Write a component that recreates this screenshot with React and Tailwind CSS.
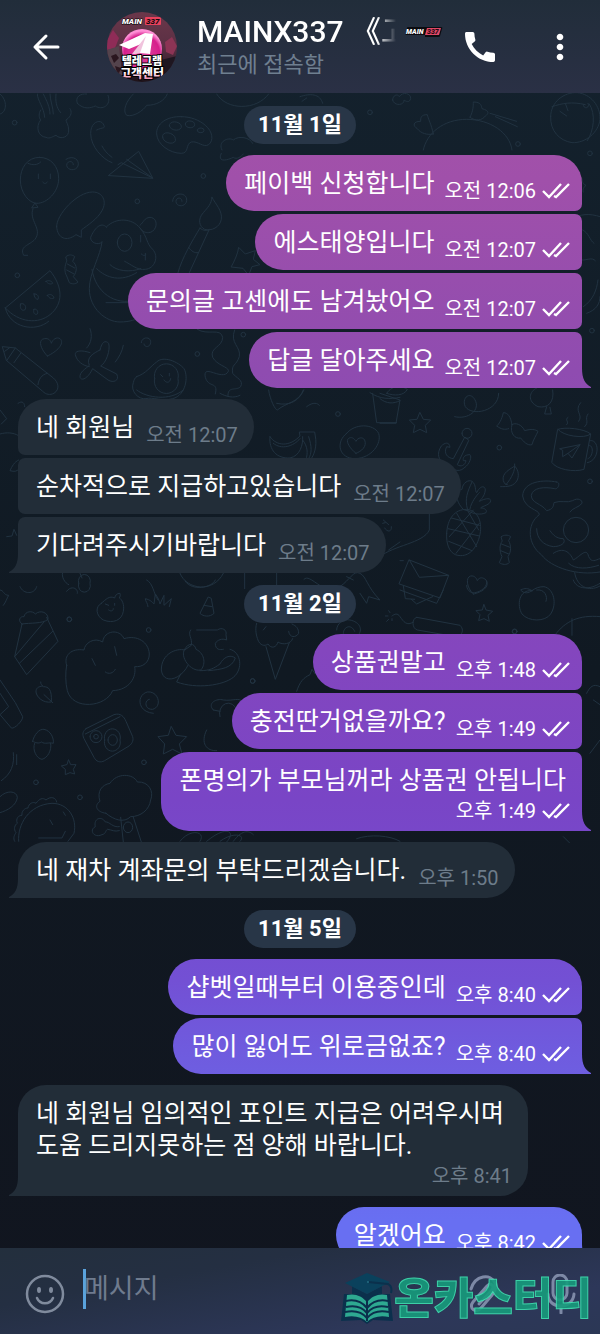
import clsx from "clsx";
import { MdCall, MdMoreVert } from "react-icons/md";

const days = [
  {
    date: "11월 1일",
    groups: [
      {
        from: "me",
        messages: [
          { lines: ["페이백 신청합니다"], time: "오전 12:06" },
          { lines: ["에스태양입니다"], time: "오전 12:07" },
          { lines: ["문의글 고센에도 남겨놨어오"], time: "오전 12:07" },
          { lines: ["답글 달아주세요"], time: "오전 12:07" }
        ]
      },
      {
        from: "them",
        messages: [
          { lines: ["네 회원님"], time: "오전 12:07" },
          { lines: ["순차적으로 지급하고있습니다"], time: "오전 12:07" },
          { lines: ["기다려주시기바랍니다"], time: "오전 12:07" }
        ]
      }
    ]
  },
  {
    date: "11월 2일",
    groups: [
      {
        from: "me",
        messages: [
          { lines: ["상품권말고"], time: "오후 1:48" },
          { lines: ["충전딴거없을까요?"], time: "오후 1:49" },
          { lines: ["폰명의가 부모님꺼라 상품권 안됩니다"], time: "오후 1:49", stacked: true }
        ]
      },
      {
        from: "them",
        messages: [{ lines: ["네 재차 계좌문의 부탁드리겠습니다."], time: "오후 1:50" }]
      }
    ]
  },
  {
    date: "11월 5일",
    groups: [
      {
        from: "me",
        messages: [
          { lines: ["샵벳일때부터 이용중인데"], time: "오후 8:40" },
          { lines: ["많이 잃어도 위로금없죠?"], time: "오후 8:40" }
        ]
      },
      {
        from: "them",
        messages: [
          {
            lines: ["네 회원님 임의적인 포인트 지급은 어려우시며", "도움 드리지못하는 점 양해 바랍니다."],
            time: "오후 8:41",
            stacked: true
          }
        ]
      },
      {
        from: "me",
        messages: [{ lines: ["알겠어요"], time: "오후 8:42" }]
      }
    ]
  }
];

// Wallpaper doodles, drawn at 3x and grouped by the area they cover
const doodles = [
  {
    at: "translate(0 110) scale(0.3333)",
    paths: [
      // balloon
      "M118 142c-36 0-57 32-57 68 0 38 26 70 50 70 30 0 65-34 65-74 0-38-24-64-58-64zM84 160c14 6 28 6 38-4M115 192v14M151 192v14M128 216c4 6 10 6 14 0M104 280l-9 14 18-2zM99 296c-14 36 30 60 6 92-16 18-48 20-34 48h12",
      // swirls
      "M198 148c22-14 42 2 36 20-6 16-32 14-34-2 0-14 20-16 20-2M518 274c0-28 44-30 42-2-2 20-32 20-32 2 0-12 18-14 18 0M424 698c0-18 30-20 28 0-2 16-20 14-20 4",
      // paper plane with its trail
      "M326 196l90-72 42 80zM354 164l10-6 94 46-78-56M290 60c20-10 28-2 20-18-10-16-38-6-38 28 0 40 36 78 64 88M306 108c6 12 16 24 30 34",
      // palette
      "M544 20c-44-2-76 22-74 52 2 32 40 58 74 58 24 0 12-28 30-34 20-4 36 18 52 8 16-12 12-40-10-58-18-16-44-26-72-26z",
      "M508 48a18 12 10 1 0 36 0 18 12 10 1 0-36 0M488 82a20 13 20 1 0 38 4 20 13 20 1 0-38-4M556 42a14 10 10 1 0 28 2 14 10 10 1 0-28-2M592 60a10 7 0 1 0 20 2 10 7 0 1 0-20-2",
      // cauliflower
      "M122 0c-6 10-6 22 0 30-16 20-8 50 16 52 12 6 22-4 30-6 14 14 40 6 38-16 0-16-8-24-8-30 18-12 18-26 12-34",
      // pickle
      "M170 350c-2-34 60-104 108-104 30 0 44 28 28 56-14 26-44 44-62 58v22l-16-8c-28 22-56 12-58-24z",
      // puppy
      "M320 350c28-28 76-26 100 4 24 28 18 46 38 64 20 22 6 58-22 60-24 4-44-16-62-24M320 352c-18-20-38 6-48 30-2 16 24 26 34 14M420 346c12-10 12-22 30-24 28 2 22 44-4 46-10 0-18-2-24-12M306 396c-4 40-38 94-38 140 0 60 50 100 92 100 30 0 52-8 60-16M276 478c10 70 70 110 130 92M290 476c30 30 74 40 120 12M318 578h80M330 464c20 20 60 24 92 12M352 398a22 26 0 1 0 44 0 22 26 0 1 0-44 0M422 376v20M424 432c8 8 16 4 12-2v20",
      // brush
      "M636 262c10 20 32 40 28 66-4 24-30 36-50 30-16-8-22-30-4-50 14-16 24-26 26-46zM600 354c10 10 22 8 28 4l-60 130M600 354c-24 40-54 90-66 134M566 412c8 12 18 18 28 16",
      // candy
      "M198 440c8-8 20-6 26 0l-6 14c14 12 14 30 2 46l14 16c-8 8-20 6-26 2l-8-20c-8-14-6-30 0-44zM202 462l22 12M200 480l22 12",
      // watermelon
      "M16 594l134-112c40 50 40 100 0 132-34 28-92 26-134-20zM16 594c14 60 90 74 130 40M62 582c-4 10 2 22 12 18 8-8-2-24-12-18zM102 552c0 10 6 16 12 16 4-8-2-18-12-16zM138 514c6 8 14 10 20 6-2-8-14-10-20-6zM142 556c6 10 14 12 20 8-2-8-10-14-20-8zM102 598c-4 10 2 18 10 14 4-6-2-18-10-14z",
      // heart
      "M142 738c-20-20-30-50-8-52 12-2 18 6 20 14 4-12 16-20 26-14 16 14-10 40-38 52z",
      // pencil
      "M8 710l38 4 114 90c16 14 20 34 2 46-12 6-24 4-34-6L20 752zM46 714l-26 38M14 724l14-10M62 730l-20 28M142 790c-18 4-26 18-28 34",
      // plane
      "M270 728c-30-10-46-4-44 6 4 20 24 34 42 36M300 720c6-26 16-30 26-20 6 20-8 60-24 68l48 24c10 20-10 28-26 18l-46-34c-12 26-32 40-38 26-2-16 18-26 28-36-10-24 12-36 32-46zM270 656c8 20 4 44-10 58M370 706c-4 20-12 34-24 50",
      // fried egg
      "M410 800c30-10 40-30 60-44 20-20 66 0 82 20 14 24 6 80-34 90-30 10-60-6-80 0-22 4-48-22-38-48 2-8 4-14 10-18zM464 806a36 36 0 1 0 70 0 36 36 0 1 0-70 0M482 794l6 6M508 790v8M492 810c6 10 18 10 20-4",
      // squiggles
      "M592 658c30 20 70-6 76 24 0 30-40 30-30 60 16 30 66 30 40 50-24 12-70-30-62 10 10 34 40 10 30 50M704 660c-16 40 20 50 14 80-10 30-24 20-20 50 10 14 34 20 24 40-14 14-40-4-38 30",
      "M694 470c10-18 20-40 22-58l20 20 30-10-6 26 20 16-24 6-10 26-16-20z",
      "M666 120c-14-26 20-40 34-30 16-14 50-8 58 10M664 130c-14 30 20 20 36 12 10 8 24-2 30-10"
    ],
    dots: [[44, 38], [412, 274], [610, 198], [52, 496], [592, 732], [730, 674]]
  },
  {
    at: "translate(380 380) scale(0.3333)",
    paths: [
      // plant pot
      "M0 40l60 20-12 70H0M0 56c20 16 40 16 60 6M20 40c20-30 50-20 62-12-10 20-40 20-62 12",
      "M224 110c40 10 80-20 60-52-16-26-40-2-28 22 20 30 100 14 100-40",
      // stars
      "M120 98l10 20 22 2-16 16 4 22-20-10-20 10 4-22-16-16 22-2zM312 674l6 16 20 4-14 12 4 18-16-8-16 6 4-18-12-12 18-2z",
      // bow
      "M396 134c-4-24-12-36-26-36-4 20-14 36-20 40 14 10 24 12 36 8M396 134c10-8 30 0 38 18 20-6 32-4 40 2-6 14-14 24-18 40-14 4-26-10-34-20-16 4-34-14-26-40z",
      // anchor
      "M246 160a15 15 0 1 0 30 0 15 15 0 1 0-30 0M254 172l-34 64c-18-2-30-16-20-36l10 2c-2-18-16-14-26-4-16 24-8 46 12 50 14 20 40 32 56 16 18-12 24-34 18-40-18 0-22 10-20 18h8c-2 14-16 20-26 12l34-72z",
      // mug
      "M534 148c20-8 80-2 98 14l-20 106c-30 10-84 0-96-20zM534 148c14 20 80 30 98 14M630 182c30-6 30 60-8 66M628 196c14 0 12 34-4 40M540 206l60-12-24 40-12-14-16 10v-18zM564 220l36-26M560 134c10-8-8-14 4-22M596 124c16-20-16-30 6-56M614 140c16-16-2-20 10-38",
      // leaf
      "M362 320c20 0 40 0 50-20 8-20-2-36-8-42-10 8-40 20-34 44 4 10 6 12 12 12M404 252c2 20-8 40-26 62",
      // pineapple
      "M200 460c2-44 24-72 60-72 40 4 50 50 36 90-14 40-40 56-70 46-18-8-28-32-26-64zM204 446l94 22M214 414l84 22M206 484l70 28M230 400l60 100M262 390l34 60M280 390l-72 80M298 430l-70 90",
      "M250 388c-30-30-20-60-4-60 2-20 20-30 30-24 14 10 8 30 14 34 12-24 26-20 26-8-2 20-14 28-18 34 20-10 34-10 34-2 0 12-24 16-30 22 14 0 20 8 16 14-16 8-40 4-50-4zM262 386c-8-30 0-50 14-80M270 386c4-20 20-40 28-48",
      // octopus
      "M530 306c14 0 4 24-6 20-30-6-66-4-70 20 0 24 30 24 46 46 20-4 20-14 22-24 20-8 40 2 56-6 16-10 30-2 28 8-8 12-30 14-36 26M530 306c-40-8-100-2-102 42 6 40 50 40 50 56-40 30-34 90 6 120 30 40 110 64 176 52M550 450a38 38 0 1 0 76 0 38 38 0 1 0-76 0M470 446c0 30 20 50 50 54 20 0 40-10 30-24-20 0-30-10-40-24M520 520c30-20 50-4 60 20 20-10 40-40 46-10 10 20 20 10 34 6M566 550c20 20 60 16 90 6M584 578c6 40 40 60 76 40",
      // candy
      "M364 470c8-6 20-6 28 0l-6 12c8 16 8 34-2 48l4 18c-8 8-22 6-30 0l8-18c-8-16-8-36 0-46zM364 492l26 10M362 512l24 10",
      // envelope
      "M88 540l118 46-26 68-122-42zM88 540l30 52 88-6M70 618l6 38 28 2M94 658l16 14 48-22M60 542h10",
      // heart
      "M280 642c-20-18-24-50-8-54 12-2 18 8 20 14 6-12 18-10 26-2 14 20-14 38-38 42z",
      // peach
      "M456 632c-40-4-46 44-30 70 20 24 70 24 86 0 20-30 10-76-20-82-14 0-26 4-36 12zM470 630c24-4 34 20 28 34M456 632c-12-8-22-8-34-2 10 12 24 10 34 2z",
      // firecracker
      "M110 712l130 24c10 10 8 20 4 26M110 712c-16 4-14 34 2 38l80 14M100 726c-20 14-30-2-40-16-8-12-16-8-24-2M26 692l4 6M16 708h8M20 724l6-6M36 722v-6",
      "M526 764c30-40 70-60 134-54M576 716v50",
      "M0 530c40-34 130-40 148-80v-50M8 430l8-2M14 444c8 14 22 12 20-4",
      "M470 24c-22 10-30 40 4 56 30 6 50-14 44-50M500 80l-6 22h20l-4-20"
    ],
    dots: [[358, 203], [630, 304], [404, 754]]
  },
  {
    at: "translate(0 580) scale(0.3333)",
    paths: [
      // cake
      "M66 132l-22 98 36 54 94-100-34-72M44 230l88-104M58 250l100-96M66 132c-14-10-6-24 6-22 4-18 26-18 34-8 16-14 40-4 38 16-16 14-54 10-78 14z",
      // strawberry
      "M304 70c-20 10-16 38 6 50 30 12 56 0 60-26 4-20-4-36-12-40 2-4 4-8 2-14-10 0-14 6-16 14-16-8-26 4-40 16zM316 72l10 4M344 70v6M326 90c8 6 14 2 14-4",
      "M624 52l-24 48c10 10 30 12 42 0l-8-44zM612 76l24 4",
      // popcorn cloud
      "M200 256c-10-30 14-52 52-46 2-20 30-40 56-24 4-36 52-40 64-10 40-12 74 10 76 46 0 26-20 40-44 38 6 30-14 70-66 72-20 50-120 60-136 0-6-24-6-54-2-76zM276 236l10 20M344 200l6 26M316 276c10 8 24 4 30-8",
      // bear in a ring
      "M572 150c-10 14 6 24 2 46l-20 14c-24-6-70 10-70 60 6 46 60 28 80-14M590 150h62c14-10 30 0 26 14l2 16c-14-6-28 0-34 10 0 20 14 20 24 18M554 208c10-20 30-20 34 0 30 14 28 50 14 62-30 6-64-40-48-62M690 208c34 8 40 60 10 84-30 24-110 36-170 14l12-24M600 272c30 0 40-6 60-20 10-20 30-30 46-18-10 30-40 34-80 38",
      // ice cream
      "M798 200l28 98 42-110M770 130c-6 20 0 40 4 50 6 16 20 20 30 12 10 16 26 10 30-6 14 10 40 6 44-10M790 150l8-10M876 132c14 6 20 14 20 28-8 14-28 14-30-6",
      // leaf
      "M122 306c0 8 4 10 8 14 16 0 26 8 24 46-24 4-44-14-46-30 0-12 6-16 20-18M132 344l26 24",
      // swirl
      "M460 400c-50-4-50-56-18-64 34-4 46 44 16 52-24 2-26-28-10-30",
      // camera
      "M258 446l84-42c20-6 30 6 36 20l20 46c4 14-4 24-14 30l-70 42c-14 8-26 2-32-10l-30-56c-6-14-4-22 6-30zM256 462l104-52M314 480a24 26 0 1 0 46 0 24 26 0 1 0-46 0M324 480a14 16 0 1 0 28 0 14 16 0 1 0-28 0M270 470a18 18 0 1 0 36 0 18 18 0 1 0-36 0M281 470a7 7 0 1 0 14 0 7 7 0 1 0-14 0",
      // stars
      "M514 440l14 26 32 4-22 22 8 30-28-14-28 14 4-30-20-22 30-4zM206 540l6 14h16l-8 14 4 14-14-4-14 6v-16l-12-10 16-4z",
      // acorn
      "M98 484c4-20 20-38 34-36 20 4 30 26 28 42-14-4-24 4-36-4-8 6-18 2-26-2zM104 490c-8 20 6 46 22 48 16-4 30-26 26-48",
      // crayon
      "M0 300l46 68 22 42c2 10-24 38-34 34L0 404M0 340l26 40-26 24",
      // broccoli
      "M318 700c-30-4-36-24-18-36-10-30 6-50 30-54 20-32 70-30 82-4 36-2 50 30 40 54-4 30-30 50-60 50-20 20-50 10-74-10zM362 712l8 74M400 712l24 74M370 742a14 16 0 1 0 28 0 14 16 0 1 0-28 0M358 740c-20 4-30-16-42-14-12-20-36-10-30 14-20 10-4 36 20 24 12-2 10-12 16-16 16 2 20 8 36 4",
      // dinosaur
      "M56 784c-4-50 30-110 100-114 50 0 76 46 66 90l-18 24M116 774h70l10-20M150 720l8 14M190 696l6 10M44 784c-6-10 0-20 4-26-8-10-4-24 4-28-6-14 4-24 14-24-2-12 8-22 18-22 2-14 16-20 24-14 10-14 20-18 30-10 14-12 30-8 32 6",
      // planet, trails
      "M0 650c20-20 50-18 52 2-2 24-30 40-52 46M4 602c30-20 40-50 36-84M50 524v30M540 784c30-40 80-30 60 0M620 784c60-50 90-30 60 2M700 784c30-40 50-30 60-20",
      "M640 390c-20-20 10-36 30-30 30 4 50-10 56 6M640 390l20 4M620 450c-20 40 0 64 30 62M660 410a26 30 0 0 1 50-20",
      "M440 0c20 10 20 40 34 60M444 80c0-10-8-16-8-24 16 4 20 10 26 16l4-30c8 10 12 20 14 30l12-26v30l22-20-6 24",
      "M556 4c20 30 80 20 90-4M60 20c10 24 44 24 50 0M0 30c12 0 10 16 26 16-6 10-8 20-16 30"
    ],
    dots: [[208, 118], [446, 150], [758, 303], [432, 547], [108, 607], [240, 652]]
  },
  {
    at: "translate(0 390) scale(0.3333)",
    paths: [
      // bananas
      "M810 140c-4 40 20 66 60 64 30-6 40-40 38-64M810 140c20 30 60 30 90-2l-2-12h46l2 12c6 30-4 60-14 70M908 150c16 20 16 40 10 58M926 140c10 30 10 50 0 66M820 160c24 20 60 10 80-14",
      // egg with a heart
      "M1040 130c24-30 80-30 96 0 10 30-20 74-70 76-50 0-60-50-26-76zM1068 190c-20-16-34-40-20-46 10-4 16 4 20 10 6-12 20-14 26-4 8 20-10 34-26 40z",
      "M806 0c4 30 20 60 26 60 30-24 60-20 80-60M830 40c40 10 70-10 80-40M920 50c20-16 34-10 38-4M1118 10l12 88h60M1110 8c30 20 60 20 90 14M410 0c30 24 100 34 140 0M660 10c20 10 40 16 60 6",
      "M54 40c14-10 20 0 20 10M0 60l20 26-16 16M0 132c20-6 40-4 54 4M56 210c-14 6-20 20-26 32 14 4 20 2 26-4M20 440l16-2 6-20 8 18",
      "M200 604c14-20 36-8 32 6M236 580a18 20 0 1 0 34 0 18 20 0 1 0-34 0M190 540c-10 20 6 40 16 44M240 550l6 14",
      "M540 550c20 50 100 60 130 0M734 550v46M830 550v40M912 568c10-10 20 0 50 20M1020 590c30-20 40-50 60-40s20 40 60 80l-34-10-6 20-20-30M1040 560l20 10",
      "M1150 390l16 14M1166 480l34-24"
    ],
    dots: [[1014, 72], [208, 688]]
  },
  {
    at: "translate(200 580) scale(0.3333)",
    paths: [
      "M600 30l110 40 20-40M800 16c0 20 20 24 24 22 20-2 40-20 36-34M1120 0c10 30 50 30 80 10",
      "M410 150c0-20 20-34 40-30 30 6 40 30 24 46M430 160c0-20 24-30 34-6",
      "M290 334c10-30 20-40 40-50l6-16 10 14 20-10 2 20M1160 340c10-20 20-30 40-20M1180 360l20 14M1170 520l30-40",
      "M60 784c40-30 80-20 60 0M470 776c40-14 100-10 130 8M1090 770l20 20"
    ],
    dots: [[158, 303], [944, 155]]
  },
  {
    at: "translate(300 0) scale(0.3333)",
    paths: [
      // winged ball and beach ball
      "M370 450c10-50 60-92 130-92s130 40 136 92M400 402c-6-30-16-46-18-58-20 0-20 10-20 20-24 0-24 14-10 22 10 14 30 20 48 16M510 352c10-20 10-34 10-46 26 0 24 14 26 20 24 6 20 16 10 22-10 14-30 16-46 4M570 340l80 24M586 350l66 30",
      "M752 350c0-44 40-74 80-72 40 4 70 40 68 80-4 40-44 72-84 70-38-6-66-36-64-78zM756 320c30-10 60-16 100-6M868 312c20 30 14 80-6 110M864 310a8 8 0 1 1-14 4M780 334l20 14M796 310l8 22",
      "M278 300c0-14 14-20 20-10 10-16 36-10 34 6-4 14-14 8-20 4 2 16-30 20-34 0zM0 290c30-10 60-10 68 20M6 304l14-10"
    ],
    dots: [[210, 337], [654, 432]]
  },
  {
    at: "translate(0 0) scale(0.3333)",
    paths: [
      "M0 282c24 20 20 56 0 60M112 282c0 20 20 40 22 70M130 282c10 20 20 40 20 60M150 282c0 20 10 40 10 60M168 282c-2 20 0 40 14 56",
      "M232 310c-8-20 10-30 28-28M232 310c20 20 40 14 54 8 20 14 50-2 38-32M400 282c-20 20-34 50-20 64 20 6 50-14 60-30 30 0 54-14 62-34M650 282c30 50 120 50 156 0"
    ],
    dots: []
  },
  {
    at: "translate(380 150) scale(0.3333)",
    paths: [
      "M602 80c10 10 0 20 16 26-10 8-10 16-8 20M570 210c30-20 60-20 90-10M606 330c12 2 30-10 40 2M610 470c30-20 40-50 44-80M620 490c30-10 40-30 40-50M608 240c20 10 20 30 34 40"
    ],
    dots: [[630, 10], [636, 542]]
  }
];

function Wallpaper() {
  return (
    <svg
      aria-hidden="true"
      className="absolute inset-x-0 top-0 w-full"
      viewBox="0 93 600 750"
      fill="none"
      stroke="#213240"
      strokeWidth="3"
      strokeLinecap="round"
      strokeLinejoin="round"
    >
      {doodles.map((area) => (
        <g key={area.at} transform={area.at}>
          {area.paths.map((d) => (
            <path key={d} d={d} />
          ))}
          {area.dots.map(([x, y]) => (
            <circle key={`${x}-${y}`} cx={x} cy={y} r="7" />
          ))}
        </g>
      ))}
    </svg>
  );
}

function Avatar() {
  return (
    <svg className="h-[70px] w-[70px] shrink-0" viewBox="0 0 70 70" role="img" aria-label="MAINX337">
      <defs>
        <clipPath id="avatar-clip">
          <circle cx="35" cy="35" r="35" />
        </clipPath>
        <linearGradient id="avatar-bg" x1="0" y1="0" x2="0" y2="1">
          <stop offset="0" stopColor="#6b374a" />
          <stop offset="0.5" stopColor="#5a3044" />
          <stop offset="1" stopColor="#1d1219" />
        </linearGradient>
        <radialGradient id="avatar-disc" cx="0.5" cy="0.6" r="0.55">
          <stop offset="0" stopColor="#e0489e" />
          <stop offset="0.8" stopColor="#d61e8c" />
          <stop offset="1" stopColor="#ff8fd6" />
        </radialGradient>
        <linearGradient id="avatar-text" x1="0" y1="0" x2="0" y2="1">
          <stop offset="0.4" stopColor="#ffffff" />
          <stop offset="1" stopColor="#ef6a9a" />
        </linearGradient>
      </defs>
      <g clipPath="url(#avatar-clip)">
        <rect width="70" height="70" fill="url(#avatar-bg)" />
        <path d="M0 28l6-10 6 8-4 10-8 2z" fill="#8f2c57" />
        <path d="M58 30l7-5 5 9-4 9-7-3z" fill="#8c3455" />
        <path d="M0 38l12-4 4 36H0z" fill="#54434c" />
        <path d="M4 44l5-2 3 4-5 5zM8 54l6 2-3 8z" fill="#2a161f" />
        <path d="M54 48l16-4v26H50z" fill="#1e1620" />
        <circle cx="35" cy="37" r="20" fill="url(#avatar-disc)" />
        <path d="M12 33l26-12 8 1-3 20-10-1-7 1 8-10-12 5z" fill="#fff" />
        <path d="M25 42l14-18-6 17z" fill="#f0c3dd" />
        <rect x="38" y="5" width="16" height="8" rx="1" fill="#e8415c" />
        <g
          fontFamily="Roboto, 'Noto Sans CJK KR', sans-serif"
          fontWeight="900"
          stroke="#000"
          paintOrder="stroke"
          strokeLinejoin="round"
        >
          <text x="15" y="12" fontSize="8" fontStyle="italic" fill="#fff" strokeWidth="1">
            MAIN
          </text>
          <text x="39" y="12" fontSize="8" fontStyle="italic" fill="#160a10" stroke="none">
            337
          </text>
          <text x="35" y="53" fontSize="11" textAnchor="middle" fill="#fff" strokeWidth="2">
            텔레그램
          </text>
          <text x="35" y="66" fontSize="12" textAnchor="middle" fill="url(#avatar-text)" strokeWidth="2">
            고객센터
          </text>
        </g>
      </g>
    </svg>
  );
}

function EmojiStatus() {
  return (
    <svg className="h-3 w-[38px] shrink-0" viewBox="0 0 38 12" role="img" aria-label="MAIN:337">
      <path d="M3 1h33q2 0 1 2l-2 7q0 1-2 1H20v-2H1q-1 0 0-2l1-5q0-1 1-1z" fill="#0b0b10" />
      <path d="M22 2h14l-2 7H20z" fill="#e04866" />
      <g fontFamily="Roboto, sans-serif" fontWeight="900" fontStyle="italic" fontSize="7">
        <text x="1" y="8" fill="#fff">
          MAIN
        </text>
        <text x="22" y="8" fill="#2b0a14">
          337
        </text>
      </g>
    </svg>
  );
}

function ChatHeader() {
  return (
    <header className="flex h-[93px] shrink-0 items-center bg-linear-to-b from-[#212d3a] to-[#2a3045] pr-5 pl-8">
      <button type="button" aria-label="뒤로" className="w-7 shrink-0">
        <svg
          viewBox="0 0 28 28"
          fill="none"
          stroke="#fff"
          strokeWidth="3"
          strokeLinecap="round"
          strokeLinejoin="round"
        >
          <path d="M26 14H3M14 3L3 14l11 11" />
        </svg>
      </button>

      <div className="ml-[47px] flex min-w-0 flex-1 items-center gap-5">
        <Avatar />
        <div className="min-w-0">
          <div className="flex items-center gap-2">
            <h1 className="max-w-[200px] overflow-hidden text-[30px] leading-9 font-medium whitespace-nowrap text-white [mask-image:linear-gradient(to_right,#000_180px,transparent_199px)]">
              MAINX337 《고
            </h1>
            <EmojiStatus />
          </div>
          <p className="text-[22px] leading-[30px] text-[#6f7f90]">최근에 접속함</p>
        </div>
      </div>

      <div className="flex shrink-0 gap-10 text-[40px] text-white">
        <button type="button" aria-label="통화">
          <MdCall />
        </button>
        <button type="button" aria-label="더보기">
          <MdMoreVert />
        </button>
      </div>
    </header>
  );
}

function DoubleCheck() {
  return (
    <svg
      className="h-4 w-7"
      viewBox="0 0 28 16"
      fill="none"
      stroke="#fff"
      strokeWidth="2.4"
      role="img"
      aria-label="읽음"
    >
      <path d="M1 8l6 6L19 1M12 13l2 1L27 1" />
    </svg>
  );
}

function Bubble({ message, mine, first, last }) {
  const { lines, time, stacked } = message;

  return (
    <div
      className={clsx(
        "relative flex pt-[13px] pb-2 pl-[18px]",
        stacked ? "flex-col items-end" : "items-end",
        mine
          ? "gap-x-[10px] self-end rounded-l-[28px] bg-[linear-gradient(#a854a6_0px,#a050aa_180px,#8f4cb0_370px,#8446be_650px,#7945c6_800px,#7350d4_980px,#6f5bde_1050px,#686ff2_1220px)] bg-fixed pr-3"
          : "gap-x-3 self-start rounded-r-[28px] bg-[#222d38] pr-4",
        mine && (first ? "rounded-tr-[28px]" : "rounded-tr-[7px]"),
        mine && (last ? "rounded-br-none" : "rounded-br-[7px]"),
        !mine && (first ? "rounded-tl-[28px]" : "rounded-tl-[7px]"),
        !mine && (last ? "rounded-bl-none" : "rounded-bl-[7px]")
      )}
    >
      <p
        className={clsx(
          "text-[25px] leading-8 whitespace-nowrap text-white",
          stacked ? "mb-[2px] self-start" : "mb-[3px]",
          stacked && (mine ? "pr-1" : "pr-2")
        )}
      >
        {lines.map((line) => (
          <span key={line} className="block">
            {line}
          </span>
        ))}
      </p>

      <div
        className={clsx(
          "flex items-center gap-[6px] text-[20px] leading-6 whitespace-nowrap",
          mine ? "text-white" : "text-[#6d7c8a]"
        )}
      >
        <time>{time}</time>
        {mine ? <DoubleCheck /> : null}
      </div>

      {last ? (
        <span
          aria-hidden="true"
          className={clsx(
            "absolute bottom-0 h-5 w-[9px]",
            mine
              ? "left-full bg-[linear-gradient(#a854a6_0px,#a050aa_180px,#8f4cb0_370px,#8446be_650px,#7945c6_800px,#7350d4_980px,#6f5bde_1050px,#686ff2_1220px)] bg-fixed [clip-path:path('M0_0C0_11_3_16_9_19V20H0z')]"
              : "right-full bg-[#222d38] [clip-path:path('M9_0C9_11_6_16_0_19V20H9z')]"
          )}
        />
      ) : null}
    </div>
  );
}

function Messages() {
  return (
    <main className="relative min-h-0 flex-1 overflow-x-hidden overflow-y-auto [scrollbar-width:none]">
      <Wallpaper />
      <div className="relative flex flex-col gap-[11px] px-[18px] py-3">
        {days.map((day) => (
          <section key={day.date} className="flex flex-col gap-[11px]">
            <h2 className="mt-px self-center rounded-full bg-[#283647] px-[14px] text-[22px] leading-[38px] font-bold text-white">
              {day.date}
            </h2>
            {day.groups.map((group, index) => (
              <div key={index} className="flex flex-col gap-[3px]">
                {group.messages.map((message, i) => (
                  <Bubble
                    key={message.lines[0]}
                    message={message}
                    mine={group.from === "me"}
                    first={i === 0}
                    last={i === group.messages.length - 1}
                  />
                ))}
              </div>
            ))}
          </section>
        ))}
      </div>
    </main>
  );
}

function Brand() {
  return (
    <div className="pointer-events-none absolute inset-y-0 right-2 flex items-center gap-px pt-4 opacity-90">
      <svg className="h-[52px] w-[52px]" viewBox="0 0 52 52" aria-hidden="true">
        <path d="M3 21h46l3 27-20-1-6 4-6-4-20 1z" fill="#08304c" />
        <path
          d="M6 22c8-2 15 1 20 7 5-6 12-9 20-7l2 22c-9-2-17 0-22 5-5-5-13-7-22-5z"
          fill="#2fb698"
        />
        <path
          d="M5 28c9-2 16 1 21 7 5-6 12-9 21-7M5 34c9-2 16 0 21 6 5-6 12-8 21-6M4 39c9-2 17 0 22 6 5-6 13-8 22-6M26 27v21"
          fill="none"
          stroke="#08304c"
          strokeWidth="2"
        />
        <path d="M11 13v8c6-1 11 1 15 6 4-5 9-7 15-6v-8l-15 8z" fill="#08304c" />
        <path d="M4 10L26 0l23 9-23 12z" fill="#07435e" />
        <path d="M27 9l20 2c4 2 4 5 3 9" fill="none" stroke="#08304c" strokeWidth="2" />
        <circle cx="27" cy="9" r="1" fill="#23758a" />
      </svg>
      <span className="text-[43px] leading-[52px] font-black text-[#179b7c] [-webkit-text-stroke:1px_#3fe0b0]">
        온카스터디
      </span>
    </div>
  );
}

function Composer() {
  return (
    <footer className="relative flex h-[86px] shrink-0 items-center bg-[linear-gradient(170deg,#232f3d_0%,#242f42_30%,#2d3759_75%,#2b3755_100%)] pr-6 pb-1 pl-[25px]">
      <button type="button" aria-label="이모티콘" className="mt-[10px] w-10 shrink-0">
        <svg viewBox="0 0 40 40" fill="none" stroke="#808b9d" strokeWidth="2.5" strokeLinecap="round">
          <circle cx="20" cy="20" r="18" />
          <path d="M12 24c3 7 13 7 16 0" />
          <ellipse cx="14" cy="16" rx="2" ry="3" fill="#808b9d" stroke="none" />
          <ellipse cx="26" cy="16" rx="2" ry="3" fill="#808b9d" stroke="none" />
        </svg>
      </button>

      <span aria-hidden="true" className="ml-[18px] h-10 w-[3px] bg-[#5aa2dc]" />
      <input
        type="text"
        aria-label="메시지"
        placeholder="메시지"
        className="-ml-[2px] h-10 min-w-0 flex-1 bg-transparent text-[27px] text-white outline-none placeholder:text-[#6f7b8e]"
      />

      <div className="mt-[10px] flex shrink-0 gap-10 text-[#7d89a6]">
        <button type="button" aria-label="파일 첨부" className="w-10">
          <svg viewBox="0 0 40 40" fill="none" stroke="currentColor" strokeWidth="3" strokeLinecap="round">
            <path d="M7 15c4-14 20-16 24-6 2 5 0 8-3 12L17 34c-5 6-13 0-8-6l14-16c4-4 8 0 5 4L15 30" />
          </svg>
        </button>
        <button type="button" aria-label="음성 메시지" className="w-8">
          <svg viewBox="0 0 32 40" fill="none" stroke="currentColor" strokeWidth="3" strokeLinecap="round">
            <rect x="9" y="1" width="14" height="25" rx="7" />
            <path d="M4 20c0 16 25 16 26 0M17 33v6" />
          </svg>
        </button>
      </div>

      <Brand />
    </footer>
  );
}

function App() {
  return (
    <div className="flex h-screen flex-col bg-linear-to-b from-[#14222e] via-[#101922] to-[#11151f] font-[Roboto,'Noto_Sans_CJK_KR',sans-serif]">
      <ChatHeader />
      <Messages />
      <Composer />
    </div>
  );
}

export default App;
